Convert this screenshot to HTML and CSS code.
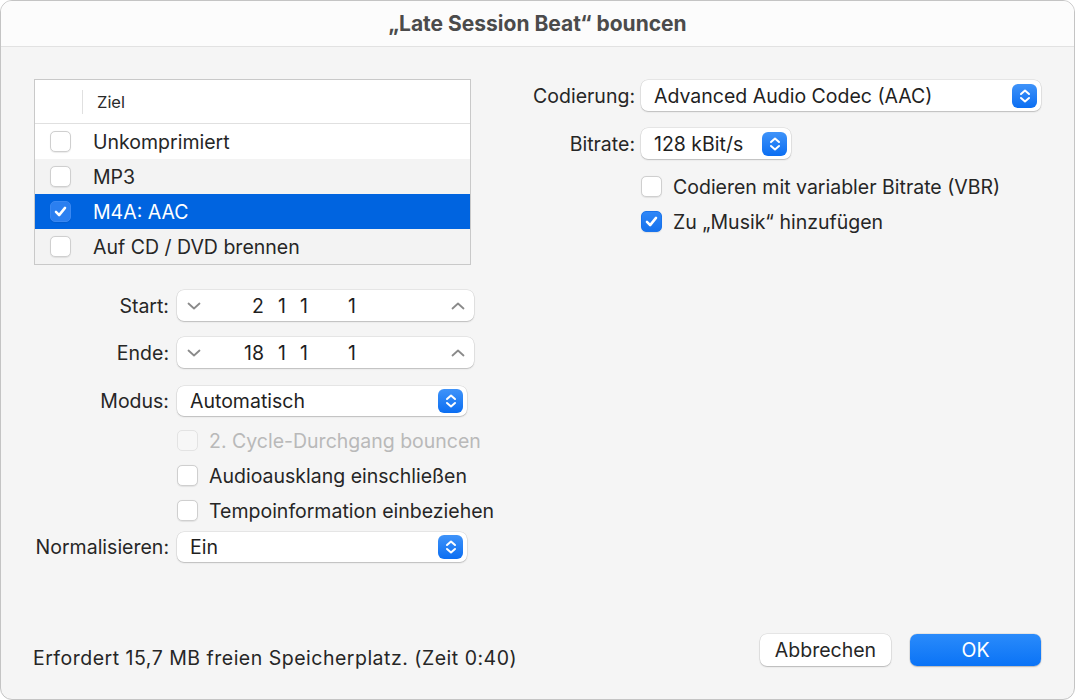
FILE: index.html
```html
<!DOCTYPE html>
<html lang="de">
<head>
<meta charset="utf-8">
<title>Bounce</title>
<link rel="stylesheet" href="styles.css">
</head>
<body>
<div class="dialog">
  <div class="titlebar">„Late Session Beat“ bouncen</div>
  <div class="content">
    <div class="left">
      <div class="table">
        <div class="thead"><span class="sep"></span><span class="th">Ziel</span></div>
        <div class="trow"><span class="cb"></span><span>Unkomprimiert</span></div>
        <div class="trow alt"><span class="cb"></span><span>MP3</span></div>
        <div class="trow sel"><span class="cb on"><svg viewBox="0 0 21 21"><path d="M5.5 11 L9 14.5 L15.5 6.5" /></svg></span><span>M4A: AAC</span></div>
        <div class="trow alt"><span class="cb"></span><span>Auf CD / DVD brennen</span></div>
      </div>

      <div class="form">
        <div class="frow r-start">
          <label class="lbl">Start:</label>
          <div class="stepper">
            <svg class="chev" viewBox="0 0 14 10"><path d="M1.5 2.5 L7 7.5 L12.5 2.5"/></svg>
            <span class="n n1">2</span><span class="n n2">1</span><span class="n n3">1</span><span class="n n4">1</span>
            <svg class="chev up" viewBox="0 0 14 10"><path d="M1.5 7.5 L7 2.5 L12.5 7.5"/></svg>
          </div>
        </div>
        <div class="frow r-ende">
          <label class="lbl">Ende:</label>
          <div class="stepper">
            <svg class="chev" viewBox="0 0 14 10"><path d="M1.5 2.5 L7 7.5 L12.5 2.5"/></svg>
            <span class="n n1">18</span><span class="n n2">1</span><span class="n n3">1</span><span class="n n4">1</span>
            <svg class="chev up" viewBox="0 0 14 10"><path d="M1.5 7.5 L7 2.5 L12.5 7.5"/></svg>
          </div>
        </div>
        <div class="frow r-modus">
          <label class="lbl">Modus:</label>
          <div class="popup wide">
            <span class="ptext">Automatisch</span>
            <span class="pbtn"><svg viewBox="0 0 24 24"><path d="M8 10 L12 6.5 L16 10 M8 14 L12 17.5 L16 14"/></svg></span>
          </div>
        </div>
        <div class="frow crow first">
          <span class="lbl"></span>
          <span class="cb dis"></span><span class="ctext dis">2. Cycle-Durchgang bouncen</span>
        </div>
        <div class="frow crow">
          <span class="lbl"></span>
          <span class="cb"></span><span class="ctext">Audioausklang einschließen</span>
        </div>
        <div class="frow crow">
          <span class="lbl"></span>
          <span class="cb"></span><span class="ctext">Tempoinformation einbeziehen</span>
        </div>
        <div class="frow r-norm">
          <label class="lbl">Normalisieren:</label>
          <div class="popup wide">
            <span class="ptext">Ein</span>
            <span class="pbtn"><svg viewBox="0 0 24 24"><path d="M8 10 L12 6.5 L16 10 M8 14 L12 17.5 L16 14"/></svg></span>
          </div>
        </div>
      </div>
    </div>

    <div class="right">
      <div class="rrow r-cod">
        <label class="rlbl">Codierung:</label>
        <div class="popup codec">
          <span class="ptext">Advanced Audio Codec (AAC)</span>
          <span class="pbtn"><svg viewBox="0 0 24 24"><path d="M8 10 L12 6.5 L16 10 M8 14 L12 17.5 L16 14"/></svg></span>
        </div>
      </div>
      <div class="rrow r-bit">
        <label class="rlbl">Bitrate:</label>
        <div class="popup bit">
          <span class="ptext">128 kBit/s</span>
          <span class="pbtn"><svg viewBox="0 0 24 24"><path d="M8 10 L12 6.5 L16 10 M8 14 L12 17.5 L16 14"/></svg></span>
        </div>
      </div>
      <div class="rrow rcheck r-vbr">
        <span class="rlbl"></span>
        <span class="cb"></span><span class="ctext">Codieren mit variabler Bitrate (VBR)</span>
      </div>
      <div class="rrow rcheck">
        <span class="rlbl"></span>
        <span class="cb on"><svg viewBox="0 0 21 21"><path d="M5.5 11 L9 14.5 L15.5 6.5" /></svg></span><span class="ctext">Zu „Musik“ hinzufügen</span>
      </div>
    </div>
  </div>
  <div class="footer">
    <span class="info">Erfordert 15,7 MB freien Speicherplatz. (Zeit 0:40)</span>
    <div class="buttons">
      <button class="btn">Abbrechen</button>
      <button class="btn primary">OK</button>
    </div>
  </div>
</div>
</body>
</html>
```

FILE: styles.css
```css
* { box-sizing: border-box; }
html, body {
  margin: 0;
  padding: 0;
  background: #ffffff;
}
body {
  font-family: Inter, "Noto Sans", "Liberation Sans", sans-serif;
  color: #262626;
  font-size: 19.5px;
}
.dialog {
  width: 1075px;
  height: 700px;
  border: 1px solid #c4c4c4;
  border-radius: 12px;
  background: #f5f5f5;
  overflow: hidden;
  display: flex;
  flex-direction: column;
}
.titlebar {
  height: 46px;
  flex: none;
  background: #fcfcfc;
  border-bottom: 1px solid #e2e2e2;
  display: flex;
  align-items: center;
  justify-content: center;
  font-weight: 700;
  font-size: 21px;
  color: #4b4b4b;
  padding-bottom: 1px;
}
.content {
  flex: 1;
  display: flex;
  padding-top: 32px;
}
.left {
  width: 505px;
  padding-left: 33px;
  flex: none;
}
.table {
  width: 437px;
  border: 1px solid #c9c9c9;
  background: #fff;
}
.thead {
  height: 44px;
  display: flex;
  align-items: center;
  border-bottom: 1px solid #e0e0e0;
  font-size: 16.5px;
  color: #2a2a2a;
}
.sep {
  width: 1px;
  height: 24px;
  background: #e0e0e0;
  margin-left: 47px;
  margin-right: 14px;
}
.trow {
  height: 35px;
  display: flex;
  align-items: center;
  padding-left: 15px;
  gap: 22px;
  font-size: 19.5px;
  color: #262626;
}
.trow.alt { background: #f3f3f3; }
.trow.sel { background: #0064e0; color: #fff; }
.cb {
  width: 21px;
  height: 21px;
  flex: none;
  border-radius: 5px;
  border: 1px solid #cfcfcf;
  background: #fff;
  box-shadow: 0 0.5px 1px rgba(0,0,0,0.08);
  display: inline-flex;
  align-items: center;
  justify-content: center;
}
.cb svg { width: 21px; height: 21px; }
.cb svg path {
  fill: none;
  stroke: #fff;
  stroke-width: 2.8;
  stroke-linecap: round;
  stroke-linejoin: round;
}
.cb.on {
  background: linear-gradient(#2f87f7, #1572ee);
  border-color: #1a74ec;
}
.trow.sel .cb.on {
  background: #2b7ff0;
  border-color: #3a88f2;
}
.cb.dis {
  border-color: #e3e3e3;
  background: #f7f7f7;
  box-shadow: none;
}
.form {
  margin-top: 25px;
  margin-left: -1px;
}
.frow {
  display: flex;
  align-items: center;
}
.lbl {
  width: 136px;
  text-align: right;
  margin-right: 8px;
  flex: none;
  font-size: 19.5px;
  color: #262626;
  white-space: nowrap;
}
.r-ende { margin-top: 16px; }
.r-modus { margin-top: 18px; }
.crow { height: 35px; }
.crow.first { margin-top: 7px; }
.r-norm { margin-top: 4px; }
.ctext {
  margin-left: 11px;
  font-size: 19.5px;
  white-space: nowrap;
}
.ctext.dis { color: #b9b9b9; }
.stepper {
  position: relative;
  width: 297px;
  height: 31px;
  background: #fff;
  border-radius: 7px;
  box-shadow: 0 0 0 0.5px rgba(0,0,0,0.12), 0 1px 1.5px rgba(0,0,0,0.18);
  display: flex;
  align-items: center;
  padding-left: 10px;
  font-size: 19.5px;
  color: #1f1f1f;
}
.chev { width: 14px; height: 10px; flex: none; }
.chev path {
  fill: none;
  stroke: #8a8a8a;
  stroke-width: 1.8;
  stroke-linecap: round;
  stroke-linejoin: round;
}
.chev.up { margin-left: auto; margin-right: 9px; }
.n { display: inline-block; text-align: right; }
.n1 { width: 63px; }
.n2 { width: 22px; }
.n3 { width: 22px; }
.n4 { width: 48px; }
.popup {
  height: 30px;
  background: #fff;
  border-radius: 7px;
  box-shadow: 0 0 0 0.5px rgba(0,0,0,0.12), 0 1px 1.5px rgba(0,0,0,0.18);
  display: flex;
  align-items: center;
  padding-left: 13px;
  padding-right: 4px;
  font-size: 19.5px;
  color: #1f1f1f;
}
.popup.wide { width: 290px; }
.pbtn {
  margin-left: auto;
  width: 25px;
  height: 24px;
  border-radius: 6px;
  background: linear-gradient(#3f93f9, #0b6ef2);
  display: inline-flex;
  align-items: center;
  justify-content: center;
  flex: none;
}
.pbtn svg { width: 24px; height: 24px; }
.pbtn svg path {
  fill: none;
  stroke: #fff;
  stroke-width: 2;
  stroke-linecap: round;
  stroke-linejoin: round;
}
.right {
  flex: 1;
  padding-top: 1px;
}
.rrow {
  display: flex;
  align-items: center;
}
.rlbl {
  width: 129px;
  flex: none;
  text-align: right;
  margin-right: 6px;
  font-size: 19.5px;
  color: #262626;
}
.popup.codec { width: 400px; height: 31px; }
.popup.bit { width: 150px; height: 31px; }
.r-bit { margin-top: 17px; }
.rcheck { height: 35px; }
.r-vbr { margin-top: 10px; }
.footer {
  height: 72px;
  flex: none;
  display: flex;
  align-items: center;
  padding-left: 32px;
  padding-right: 33px;
  padding-bottom: 26px;
}
.info {
  font-size: 19.5px;
  letter-spacing: 0.5px;
  color: #262626;
  margin-top: 16px;
}
.buttons {
  margin-left: auto;
  display: flex;
  gap: 19px;
}
.btn {
  width: 131px;
  height: 32px;
  border: none;
  border-radius: 7px;
  background: #fff;
  box-shadow: 0 0 0 0.5px rgba(0,0,0,0.12), 0 1px 1.5px rgba(0,0,0,0.2);
  font-family: Inter, "Noto Sans", sans-serif;
  font-size: 19.5px;
  color: #262626;
  padding: 0;
}
.btn.primary {
  background: linear-gradient(#2a8bfb, #0a73f6);
  color: #fff;
}
```
